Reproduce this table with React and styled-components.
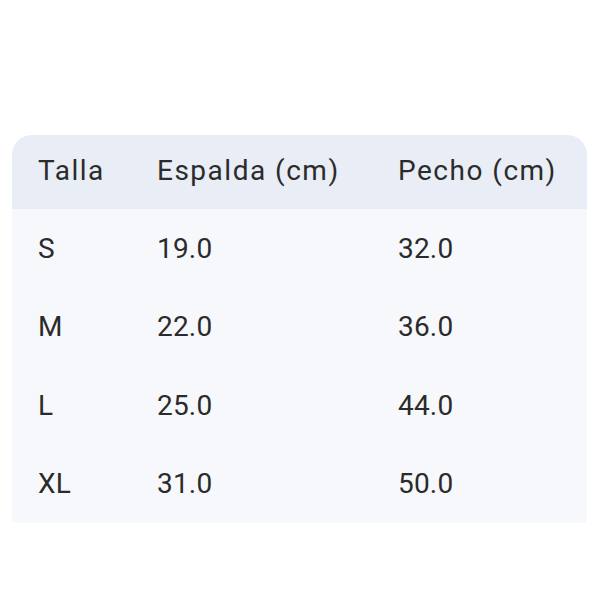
import React from 'react';
import styled, { createGlobalStyle } from 'styled-components';

const rows = [
  { size: 'S', back: '19.0', chest: '32.0' },
  { size: 'M', back: '22.0', chest: '36.0' },
  { size: 'L', back: '25.0', chest: '44.0' },
  { size: 'XL', back: '31.0', chest: '50.0' },
];

const GlobalStyle = createGlobalStyle`
  body {
    margin: 0;
    background: #ffffff;
    font-family: Roboto, "Noto Sans", sans-serif;
  }
`;

function App() {
  return (
    <Page>
      <GlobalStyle />
      <Table>
        <HeaderRow>
          <HeadCell>Talla</HeadCell>
          <HeadCell>Espalda (cm)</HeadCell>
          <HeadCell>Pecho (cm)</HeadCell>
        </HeaderRow>
        {rows.map((row) => (
          <Row key={row.size}>
            <Cell>{row.size}</Cell>
            <Cell>{row.back}</Cell>
            <Cell>{row.chest}</Cell>
          </Row>
        ))}
      </Table>
    </Page>
  );
}

const Page = styled.div`
  width: 600px;
  height: 600px;
  padding: 135px 13px 0 12px;
  box-sizing: border-box;
`;

const Table = styled.div`
  width: 575px;
  border-radius: 20px 20px 4px 4px;
  overflow: hidden;
  background: #f7f8fc;
`;

const HeaderRow = styled.div`
  display: grid;
  grid-template-columns: 119px 241px 1fr;
  align-items: center;
  height: 74px;
  padding: 0 26px;
  background: #e9edf5;
`;

const Row = styled(HeaderRow)`
  height: 78.5px;
  background: transparent;
`;

const HeadCell = styled.div`
  font-size: 28px;
  line-height: 1;
  color: #2b2b2b;
  letter-spacing: 1.5px;
  padding-bottom: 3px;
`;

const Cell = styled.div`
  font-size: 28px;
  line-height: 1;
  color: #2b2b2b;
  letter-spacing: 0.2px;
  padding-top: 1px;
`;

export default App;
